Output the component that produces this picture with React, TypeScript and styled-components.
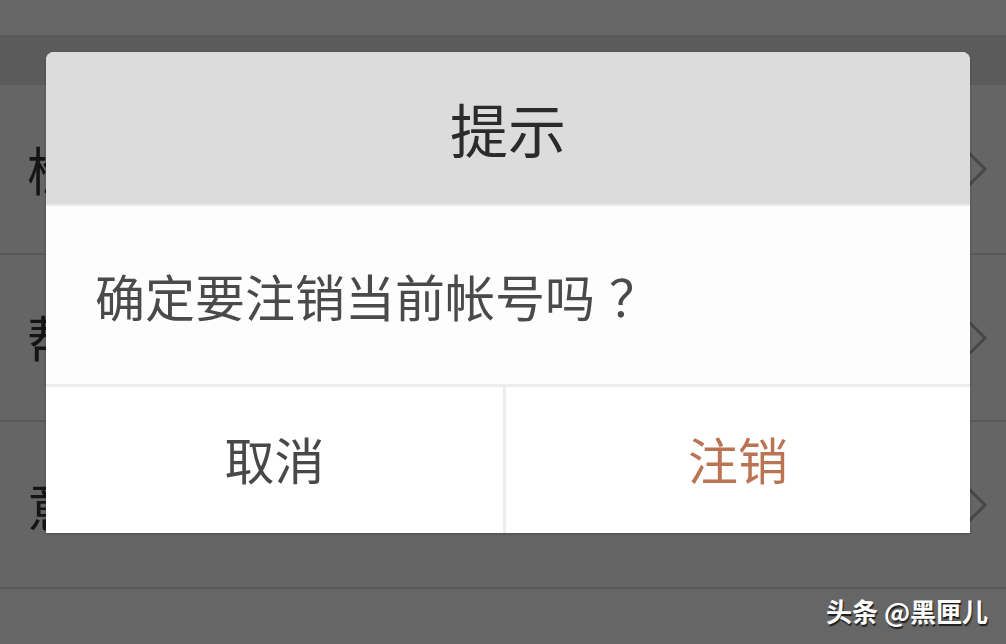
import React from 'react';
import styled, { createGlobalStyle } from 'styled-components';

const GlobalStyle = createGlobalStyle`
  html, body {
    margin: 0;
    padding: 0;
    background: #666666;
    overflow: hidden;
  }
  body {
    font-family: "Noto Sans CJK SC", "Noto Sans", sans-serif;
  }
`;

const rows = ['检查更新', '帮助与反馈', '意见反馈'];

const Screen = styled.div`
  position: relative;
  width: 1006px;
  height: 644px;
  background: #666666;
  display: flex;
  flex-direction: column;
  overflow: hidden;
`;

const StatusBar = styled.div`
  height: 35px;
  background: #676767;
  border-bottom: 2px solid #585858;
`;

const SectionBand = styled.div`
  height: 48px;
  background: #5b5b5b;
`;

const Row = styled.div<{ height: number }>`
  height: ${({ height }) => height}px;
  box-sizing: border-box;
  display: flex;
  align-items: center;
  justify-content: space-between;
  padding: 0 17px 0 27px;
  border-bottom: 2px solid #595959;
  background: #656565;
`;

const RowLabel = styled.span`
  font-size: 52px;
  color: #141414;
  line-height: 1;
`;

const Chevron = styled.svg`
  width: 24px;
  height: 40px;
  flex-shrink: 0;
`;

const Filler = styled.div`
  flex: 1;
  background: #666666;
`;

const Dialog = styled.div`
  position: absolute;
  left: 46px;
  top: 52px;
  width: 924px;
  height: 481px;
  display: flex;
  flex-direction: column;
  border-radius: 8px 8px 0 0;
  overflow: hidden;
  background: #fdfdfd;
  box-shadow: 0 1px 3px rgba(0, 0, 0, 0.25);
`;

const Header = styled.div`
  height: 152px;
  background: #dcdcdc;
  border-bottom: 2px solid #e9e9e9;
  display: flex;
  align-items: center;
  justify-content: center;
  font-size: 58px;
  color: #2b2b2b;
`;

const Message = styled.div`
  height: 178px;
  display: flex;
  align-items: center;
  padding-left: 49px;
  font-size: 50px;
  color: #4a4a4a;
  border-bottom: 3px solid #ececec;
`;

const Question = styled.span`
  margin-left: 14px;
`;

const Actions = styled.div`
  flex: 1;
  display: grid;
  grid-template-columns: 457px 3px 1fr;
`;

const Divider = styled.div`
  background: #ececec;
`;

const ActionButton = styled.button<{ tone?: 'danger' }>`
  border: none;
  background: #ffffff;
  font-family: inherit;
  font-size: 50px;
  color: ${({ tone }) => (tone === 'danger' ? '#bb7453' : '#484848')};
  display: flex;
  align-items: center;
  justify-content: center;
  padding: 0 0 4px;
  cursor: pointer;
`;

const Watermark = styled.div`
  position: absolute;
  left: 826px;
  top: 592px;
  font-size: 26px;
  font-weight: 700;
  color: #ffffff;
  white-space: nowrap;
  text-shadow: 1px 2px 1px rgba(0, 0, 0, 0.7);
`;

const rowHeights = [170, 167, 167];

export default function App() {
  return (
    <>
      <GlobalStyle />
      <Screen>
        <StatusBar />
        <SectionBand />
        {rows.map((label, i) => (
          <Row key={label} height={rowHeights[i]}>
            <RowLabel>{label}</RowLabel>
            <Chevron viewBox="0 0 24 40">
              <polyline
                points="3,3 20,20 3,37"
                fill="none"
                stroke="#474747"
                strokeWidth="3"
              />
            </Chevron>
          </Row>
        ))}
        <Filler />

        <Dialog>
          <Header>提示</Header>
          <Message>
            确定要注销当前帐号吗<Question>？</Question>
          </Message>
          <Actions>
            <ActionButton>取消</ActionButton>
            <Divider />
            <ActionButton tone="danger">注销</ActionButton>
          </Actions>
        </Dialog>

        <Watermark>头条 @黑匣儿</Watermark>
      </Screen>
    </>
  );
}
